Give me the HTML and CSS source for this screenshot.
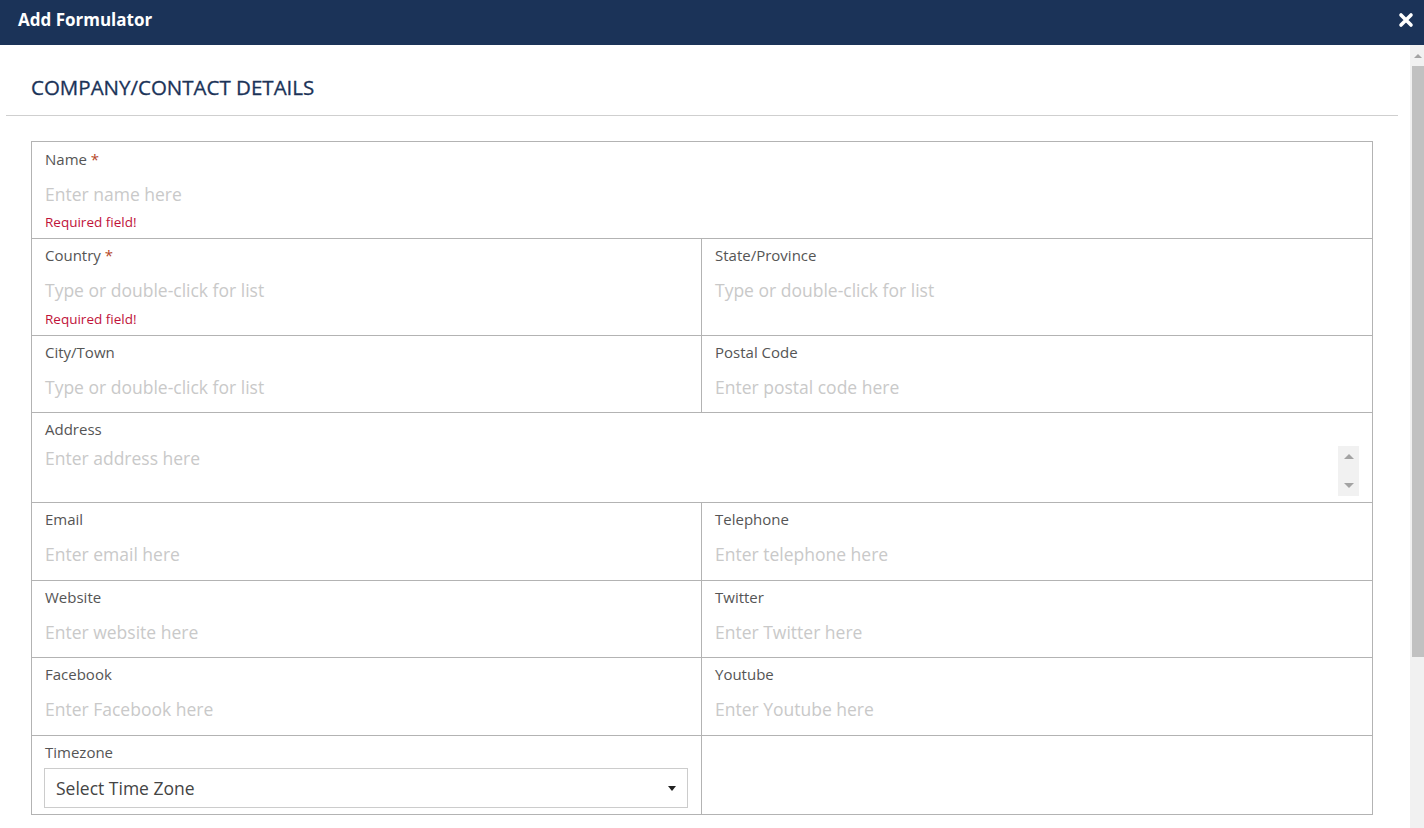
FILE: index.html
```html
<!DOCTYPE html>
<html>
<head>
<meta charset="utf-8">
<link rel="stylesheet" href="styles.css">
</head>
<body>
<div class="modal">
  <div class="modal-header">
    <div class="modal-title">Add Formulator</div>
    <svg class="close" width="16" height="16" viewBox="0 0 16 16"><path d="M3 3 L13 13 M13 3 L3 13" stroke="#fff" stroke-width="3.6" stroke-linecap="round"/></svg>
  </div>
  <div class="modal-body">
    <div class="content">
      <h2 class="section-title">COMPANY/CONTACT DETAILS</h2>
      <div class="divider"></div>
      <div class="form">
        <div class="row h97">
          <div class="cell first">
            <div class="label">Name <span class="req">*</span></div>
            <div class="input">Enter name here</div>
            <div class="error">Required field!</div>
          </div>
        </div>
        <div class="row h97">
          <div class="cell left">
            <div class="label">Country <span class="req">*</span></div>
            <div class="input">Type or double-click for list</div>
            <div class="error">Required field!</div>
          </div>
          <div class="cell">
            <div class="label">State/Province</div>
            <div class="input">Type or double-click for list</div>
          </div>
        </div>
        <div class="row h77">
          <div class="cell left">
            <div class="label">City/Town</div>
            <div class="input">Type or double-click for list</div>
          </div>
          <div class="cell">
            <div class="label">Postal Code</div>
            <div class="input">Enter postal code here</div>
          </div>
        </div>
        <div class="row h90">
          <div class="cell">
            <div class="label">Address</div>
            <div class="textarea">
              <div class="ta-text">Enter address here</div>
              <div class="ta-scroll">
                <span class="tri up"></span>
                <span class="tri down"></span>
              </div>
            </div>
          </div>
        </div>
        <div class="row h78">
          <div class="cell left">
            <div class="label">Email</div>
            <div class="input">Enter email here</div>
          </div>
          <div class="cell">
            <div class="label">Telephone</div>
            <div class="input">Enter telephone here</div>
          </div>
        </div>
        <div class="row h77">
          <div class="cell left">
            <div class="label">Website</div>
            <div class="input">Enter website here</div>
          </div>
          <div class="cell">
            <div class="label">Twitter</div>
            <div class="input">Enter Twitter here</div>
          </div>
        </div>
        <div class="row h78">
          <div class="cell left">
            <div class="label">Facebook</div>
            <div class="input">Enter Facebook here</div>
          </div>
          <div class="cell">
            <div class="label">Youtube</div>
            <div class="input">Enter Youtube here</div>
          </div>
        </div>
        <div class="row h79">
          <div class="cell left">
            <div class="label">Timezone</div>
            <div class="select">
              <span class="select-text">Select Time Zone</span>
              <span class="caret"></span>
            </div>
          </div>
          <div class="cell"></div>
        </div>
      </div>
    </div>
    <div class="scrollbar">
      <div class="sb-btn"><span class="sb-arrow"></span></div>
      <div class="sb-thumb"></div>
    </div>
  </div>
</div>
</body>
</html>
```

FILE: styles.css
```css
* { box-sizing: border-box; }
html, body {
  margin: 0;
  padding: 0;
  width: 1424px;
  height: 828px;
  overflow: hidden;
  background: #fff;
  font-family: "Open Sans", "Liberation Sans", sans-serif;
}
.modal {
  display: flex;
  flex-direction: column;
  height: 828px;
}
.modal-header {
  height: 45px;
  background: #1b3358;
  display: flex;
  align-items: center;
  justify-content: space-between;
  padding: 0 10px 0 18px;
  flex: none;
}
.modal-title {
  color: #fff;
  font-weight: 700;
  font-size: 17px;
  line-height: 20px;
  margin-top: -5px;
}
.close { margin-top: -5px; }
.modal-body {
  flex: 1;
  display: flex;
  min-height: 0;
}
.content {
  flex: 1;
  padding: 0 12px 0 6px;
}
.section-title {
  margin: 0;
  padding: 28px 0 0 25px;
  font-size: 20.5px;
  font-weight: 400;
  color: #1b3358;
  line-height: 28px;
  height: 70px;
  -webkit-text-stroke: 0.3px #1b3358;
}
.divider {
  height: 1px;
  background: #cfcfcf;
}
.form {
  margin: 25px 25px 0 25px;
  border-top: 1px solid #b3b3b3;
  border-left: 1px solid #b3b3b3;
}
.row { display: flex; }
.h97 { height: 97px; }
.h77 { height: 77px; }
.h78 { height: 78px; }
.h79 { height: 79px; }
.h90 { height: 90px; }
.cell {
  flex: 1;
  border-right: 1px solid #b3b3b3;
  border-bottom: 1px solid #b3b3b3;
  padding: 5px 12px 0 13px;
  min-width: 0;
}
.cell.first { padding-top: 6px; }
.cell.left {
  flex: none;
  width: 670px;
}
.label {
  font-size: 15px;
  line-height: 22px;
  color: #555;
}
.req { color: #b5462a; }
.input {
  margin-top: 6px;
  height: 36px;
  line-height: 36px;
  font-size: 17.5px;
  color: #c9c9c9;
}
.error {
  margin-top: 2px;
  font-size: 13.5px;
  line-height: 18px;
  color: #c0133a;
}
.cell.first .error { margin-top: 1px; }
.textarea {
  margin-top: 6px;
  height: 50px;
  display: flex;
  padding-right: 1px;
}
.ta-text {
  flex: 1;
  font-size: 17.5px;
  line-height: 24px;
  color: #c9c9c9;
}
.ta-scroll {
  width: 21px;
  background: #f1f1f1;
  display: flex;
  flex-direction: column;
  justify-content: space-between;
  align-items: center;
  padding: 8px 0 8px;
}
.tri {
  width: 0;
  height: 0;
  border-left: 5px solid transparent;
  border-right: 5px solid transparent;
}
.tri.up { border-bottom: 5px solid #a3a3a3; }
.tri.down { border-top: 5px solid #a3a3a3; }
.select {
  margin-top: 5px;
  height: 40px;
  border: 1px solid #cccccc;
  margin-left: -1px;
  margin-right: 1px;
  display: flex;
  align-items: center;
  justify-content: space-between;
  padding: 0 11px 0 11px;
}
.select-text {
  font-size: 17.5px;
  color: #444;
}
.caret {
  width: 0;
  height: 0;
  border-left: 4px solid transparent;
  border-right: 4px solid transparent;
  border-top: 5px solid #222;
}
.scrollbar {
  width: 14px;
  background: #f1f1f1;
  flex: none;
  display: flex;
  flex-direction: column;
  align-items: flex-end;
}
.sb-btn {
  height: 21px;
  width: 12px;
  display: flex;
  justify-content: center;
  padding-top: 9px;
}
.sb-arrow {
  width: 0;
  height: 0;
  border-left: 4px solid transparent;
  border-right: 4px solid transparent;
  border-bottom: 4px solid #a3a3a3;
}
.sb-thumb {
  width: 12px;
  height: 591px;
  background: #c1c1c1;
}
```
